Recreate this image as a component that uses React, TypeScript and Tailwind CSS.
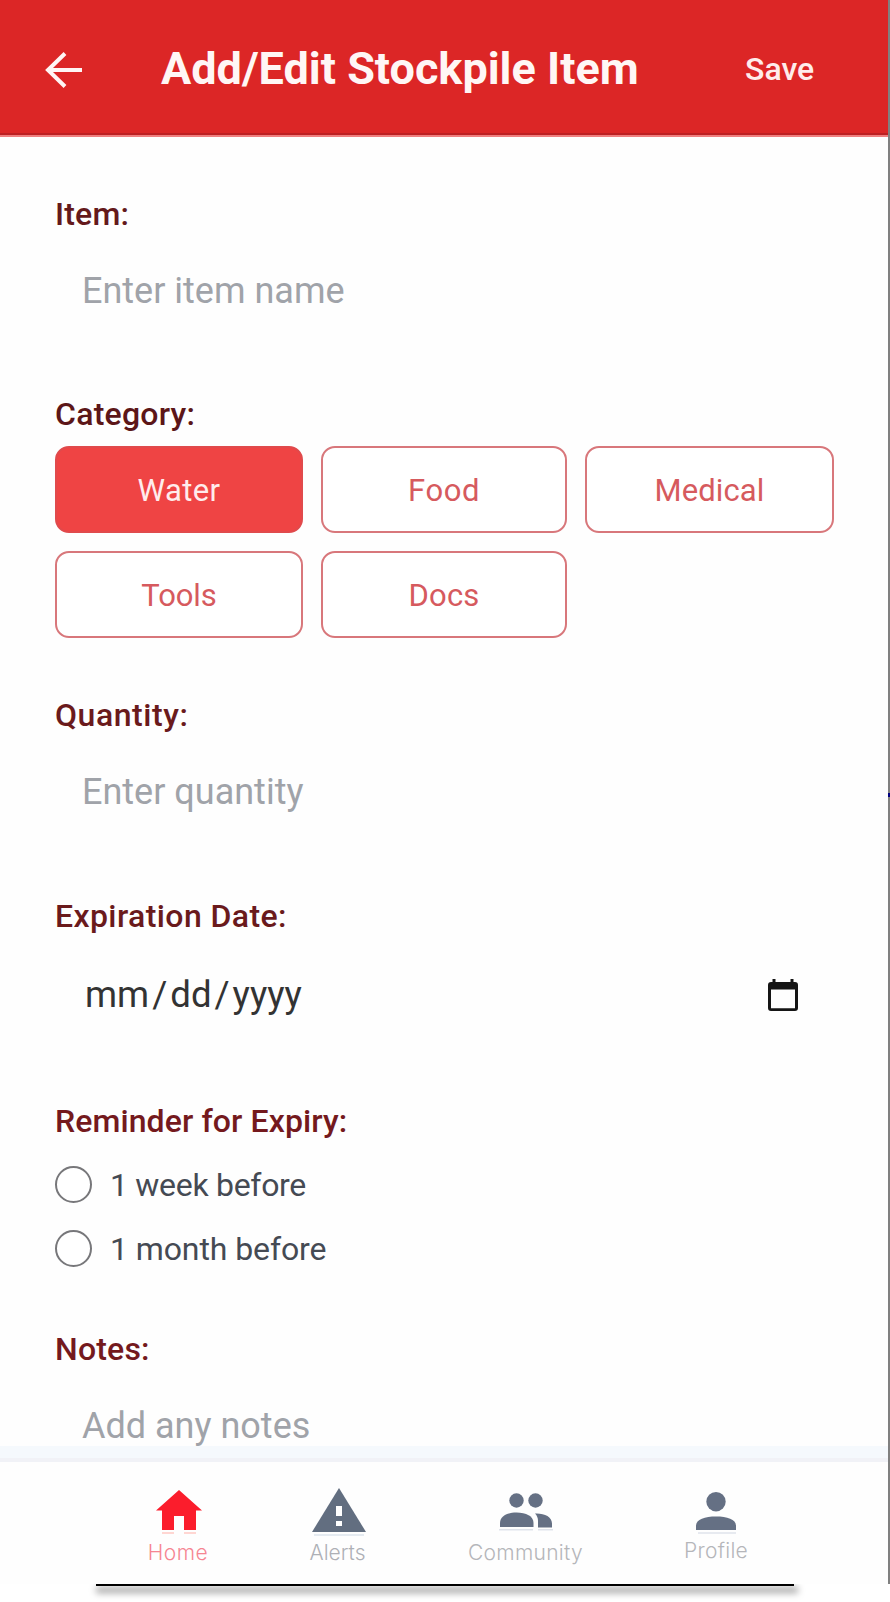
import React from "react";

const categories = [
  { name: "Water", tracking: "tracking-[0.4px]" },
  { name: "Food", tracking: "tracking-[0.6px]" },
  { name: "Medical", tracking: "tracking-[0.1px]" },
  { name: "Tools", tracking: "tracking-[-0.1px]" },
  { name: "Docs", tracking: "tracking-[0.2px]" },
];

function Label({ children, tone }: { children: string; tone: string }) {
  return (
    <h2 className={`h-10 text-[32px] leading-[38px] font-medium whitespace-nowrap ${tone}`}>
      {children}
    </h2>
  );
}

function Placeholder({ children }: { children: string }) {
  return (
    <div className="mt-3 flex h-[88px] items-center pl-[27px] text-[36px] leading-[48px] whitespace-nowrap text-[#a0a3a9]">
      {children}
    </div>
  );
}

function Radio({ children, tracking }: { children: string; tracking: string }) {
  return (
    <div className="flex h-[37px] items-center gap-[18px]">
      <span className="size-[37px] rounded-full border-2 border-[#77777a] bg-white" />
      <span className={`pt-px text-[32px] leading-[37px] whitespace-nowrap text-[#454a53] ${tracking}`}>
        {children}
      </span>
    </div>
  );
}

function HomeIcon() {
  return (
    <svg className="h-[44px] w-[46px]" viewBox="0 0 46 44">
      <path d="M23 0 46 20.5H40V40H28V26H18V40H6V20.5H0Z" fill="#fb1d2c" />
      <path d="M6 43h12M28 43h12" stroke="#ffc9c4" strokeWidth="1.5" />
    </svg>
  );
}

function AlertIcon() {
  return (
    <svg className="h-[48px] w-[54px]" viewBox="0 0 54 48">
      <path d="M27 0 54 44H0Z" fill="#626e80" />
      <path d="M24 18h6v10h-6zM24 33h6v5h-6z" fill="#fff" />
      <path d="M2 47h50" stroke="#dde4ec" strokeWidth="1.5" />
    </svg>
  );
}

function CommunityIcon() {
  return (
    <svg className="h-[38px] w-[54px]" viewBox="0 0 54 38">
      <g fill="#657084">
        <circle cx="17.5" cy="7.5" r="7.2" />
        <circle cx="36.5" cy="7.5" r="7.2" />
        <path d="M1 34V30C1 23 8 19.5 17.5 19.5S34.5 23 34.5 30V34Z" />
        <path d="M36 20.5C45 20 53 23.5 53 30.5V34.5H39V28C39 25 38 22.5 36 20.5Z" />
      </g>
      <path d="M0 36.8h34M39 36.8h15" stroke="#dfe3eb" strokeWidth="1.5" />
    </svg>
  );
}

function ProfileIcon() {
  return (
    <svg className="h-[42px] w-[40px]" viewBox="0 0 40 42">
      <g fill="#657084">
        <circle cx="20" cy="9.7" r="9.7" />
        <path d="M0 38V34C0 27 9 24.5 20 24.5S40 27 40 34V38Z" />
      </g>
      <path d="M2 41h38" stroke="#dfe3eb" strokeWidth="1.5" />
    </svg>
  );
}

export default function App() {
  return (
    <div className="h-[1602px] w-[890px] overflow-hidden bg-white font-['Roboto',sans-serif]">
      <div className="flex h-[1584px]">
        <div className="flex w-[888px] flex-col bg-[#fefefe]">
          <header className="flex h-[137px] shrink-0 items-center border-b-2 border-b-[#ef7f7f] bg-[#dc2626] pt-[3px] pl-[45px] text-white shadow-[inset_0_-2px_0_#bd2022]">
            <svg className="mt-[2px] h-[36px] w-[38px]" viewBox="0 0 38 36" fill="none" stroke="#fff5f4" strokeWidth="4">
              <path d="M37 18H3M20 1.5 3 18 20 34.5" />
            </svg>
            <h1 className="ml-[78px] w-[584px] text-[45px] leading-[60px] font-bold whitespace-nowrap text-[#fff6f5]">
              Add/Edit Stockpile Item
            </h1>
            <button className="pb-px text-[32px] leading-10 font-medium text-[#ffeceb]">Save</button>
          </header>

          <main className="flex h-[1309px] shrink-0 flex-col overflow-hidden px-[55px] pt-[58px]">
            <section className="h-[200px] shrink-0">
              <Label tone="text-[#64191b] tracking-[0.2px]">Item:</Label>
              <Placeholder>Enter item name</Placeholder>
            </section>

            <section className="h-[301px] shrink-0">
              <Label tone="text-[#5c1618] tracking-[0.25px]">Category:</Label>
              <div className="mt-[11px] grid w-[779px] grid-cols-[248px_246px_249px] gap-[18px]">
                {categories.map(({ name, tracking }, i) => (
                  <button
                    key={name}
                    className={`h-[87px] rounded-[14px] border-2 pt-[3px] text-[31px] ${tracking} ${
                      i === 0
                        ? "border-[#e04a4c] bg-[#ef4444] text-[#ffecec]"
                        : "border-[#d8777b] bg-white text-[#d65a5e]"
                    }`}
                  >
                    {name}
                  </button>
                ))}
              </div>
            </section>

            <section className="h-[201px] shrink-0">
              <Label tone="text-[#6a1a1c] tracking-[0.55px]">Quantity:</Label>
              <Placeholder>Enter quantity</Placeholder>
            </section>

            <section className="h-[205px] shrink-0">
              <Label tone="text-[#6a1a1c] tracking-[0.4px]">Expiration Date:</Label>
              <div className="mt-[14px] flex h-[88px] items-center justify-between pr-[35px] pl-[30px]">
                <span className="text-[36.6px] leading-[48px] text-[#333]">
                  mm<span className="px-[3px]">/</span>dd<span className="px-[3px]">/</span>yyyy
                </span>
                <svg className="h-[32px] w-[30px]" viewBox="0 0 30 32">
                  <path d="M4.5 0h3v3h15V0h3v3H27a3 3 0 0 1 3 3v23a3 3 0 0 1-3 3H3a3 3 0 0 1-3-3V6a3 3 0 0 1 3-3h1.5zM3 10.5v18.7h24V10.5z" fill="#151515" fillRule="evenodd" />
                </svg>
              </div>
            </section>

            <section className="h-[228px] shrink-0">
              <Label tone="text-[#74191d] tracking-[0.1px]">Reminder for Expiry:</Label>
              <div className="mt-[24px] flex flex-col gap-[27px]">
                <Radio tracking="tracking-[-0.3px]">1 week before</Radio>
                <Radio tracking="tracking-[-0.1px]">1 month before</Radio>
              </div>
            </section>

            <section>
              <Label tone="text-[#74191d] tracking-[0.2px]">Notes:</Label>
              <Placeholder>Add any notes</Placeholder>
            </section>
          </main>

          <div className="h-3 shrink-0 bg-[#f5f9fd]" />
          <nav className="flex h-[126px] shrink-0 border-t-4 border-[#f1f2f7] pl-[99px] font-['Inter',sans-serif] text-[21px] leading-[24px] font-light">
            <div className="flex w-[160px] flex-col items-center pt-[28px]">
              <HomeIcon />
              <span className="mt-[7px] mr-[2px] tracking-[0.5px] text-[#f68592]">Home</span>
            </div>
            <div className="flex w-[160px] flex-col items-center pt-[26px]">
              <AlertIcon />
              <span className="mt-[5px] mr-[3px] text-[#aeb0b6]">Alerts</span>
            </div>
            <div className="flex w-[214px] flex-col items-center pt-[31px]">
              <CommunityIcon />
              <span className="mt-[10px] mr-[1px] tracking-[0.3px] text-[#b5b6ba]">Community</span>
            </div>
            <div className="flex w-[166px] flex-col items-center pt-[30px]">
              <ProfileIcon />
              <span className="mt-[5px] tracking-[0.3px] text-[#b5b6ba]">Profile</span>
            </div>
          </nav>
        </div>
        <div className="flex w-[2px] flex-col bg-[#808080] pt-[793px]">
          <div className="h-1 bg-[#000080]" />
        </div>
      </div>
      <div className="ml-[96px] h-[2px] w-[698px] bg-black shadow-[2px_5px_7px_2px_rgba(0,0,0,0.36)]" />
    </div>
  );
}
